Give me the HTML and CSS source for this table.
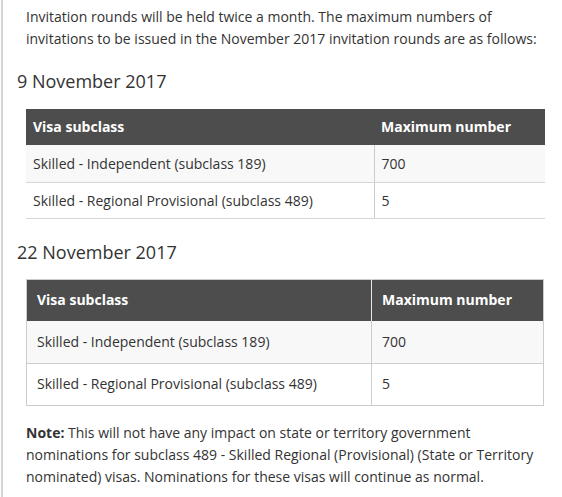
FILE: index.html
```html
<!DOCTYPE html>
<html lang="en">
<head>
<meta charset="utf-8">
<link rel="stylesheet" href="styles.css">
</head>
<body>
<div class="page">
  <p class="intro">Invitation rounds will be held twice a month. The maximum numbers of invitations to be issued in the November 2017 invitation rounds are as follows:</p>

  <h2 class="date first">9 November 2017</h2>
  <table class="tbl tbl-a">
    <thead>
      <tr><th class="c1">Visa subclass</th><th class="c2">Maximum number</th></tr>
    </thead>
    <tbody>
      <tr class="odd"><td>Skilled - Independent (subclass 189)</td><td class="num">700</td></tr>
      <tr><td>Skilled - Regional Provisional (subclass 489)</td><td class="num">5</td></tr>
    </tbody>
  </table>

  <h2 class="date second">22 November 2017</h2>
  <table class="tbl tbl-b">
    <thead>
      <tr><th class="c1">Visa subclass</th><th class="c2">Maximum number</th></tr>
    </thead>
    <tbody>
      <tr class="odd"><td>Skilled - Independent (subclass 189)</td><td class="num">700</td></tr>
      <tr><td>Skilled - Regional Provisional (subclass 489)</td><td class="num">5</td></tr>
    </tbody>
  </table>

  <p class="note"><strong>Note:</strong> This will not have any impact on state or territory government nominations for subclass 489 - Skilled Regional (Provisional) (State or Territory nominated) visas. Nominations for these visas will continue as normal.</p>
</div>
</body>
</html>
```

FILE: styles.css
```css
html, body {
  margin: 0;
  padding: 0;
  background: #ffffff;
}

body {
  font-family: "Open Sans", "Liberation Sans", sans-serif;
  color: #333333;
  font-size: 14px;
  line-height: 22px;
}

.page {
  margin-left: 1px;
  border-left: 2px solid #d4d4d4;
  padding-left: 14px;
  min-height: 497px;
  box-sizing: border-box;
  padding-top: 6px;
}

.intro {
  margin: 0 0 0 9px;
  width: 530px;
}

.date {
  font-weight: 400;
  font-size: 18px;
  line-height: 22px;
  margin: 0;
  color: #333333;
}

.date.first {
  margin-top: 20px;
}

.date.second {
  margin-top: 22px;
}

.tbl {
  border-collapse: collapse;
  margin-left: 9px;
  width: 519px;
}

.tbl th {
  background: #4d4d4d;
  color: #ffffff;
  font-weight: 700;
  text-align: left;
}

.tbl td {
  color: #333333;
}

.tbl tbody tr.odd td {
  background: #f8f8f8;
}

/* first table */
.tbl-a {
  margin-top: 17px;
}

.tbl-a th {
  height: 36px;
  padding: 0 7px;
  box-sizing: border-box;
}

.tbl-a th.c1 {
  width: 348px;
}

.tbl-a td {
  padding: 0 7px;
  border-bottom: 1px solid #d6d6d6;
}

.tbl-a tbody tr:first-child td {
  height: 37px;
}

.tbl-a tbody tr:last-child td {
  height: 35px;
}

.tbl-a td.num {
  border-left: 1px solid #cccccc;
}

/* second table */
.tbl-b {
  margin-top: 16px;
  width: 518px;
  border: 1px solid #cccccc;
}

.tbl-b th {
  height: 41px;
  padding: 0 10px;
  box-sizing: border-box;
}

.tbl-b th.c1 {
  width: 345px;
}

.tbl-b th.c2 {
  border-left: 1px solid #e6e6e6;
}

.tbl-b td {
  padding: 0 10px;
  border-bottom: 1px solid #cccccc;
  height: 42px;
}

.tbl-b tbody tr:last-child td {
  height: 41px;
}

.tbl-b td.num {
  border-left: 1px solid #cccccc;
}

.note {
  margin: 16px 0 0 9px;
  width: 530px;
}

.note strong {
  font-weight: 700;
}
```
